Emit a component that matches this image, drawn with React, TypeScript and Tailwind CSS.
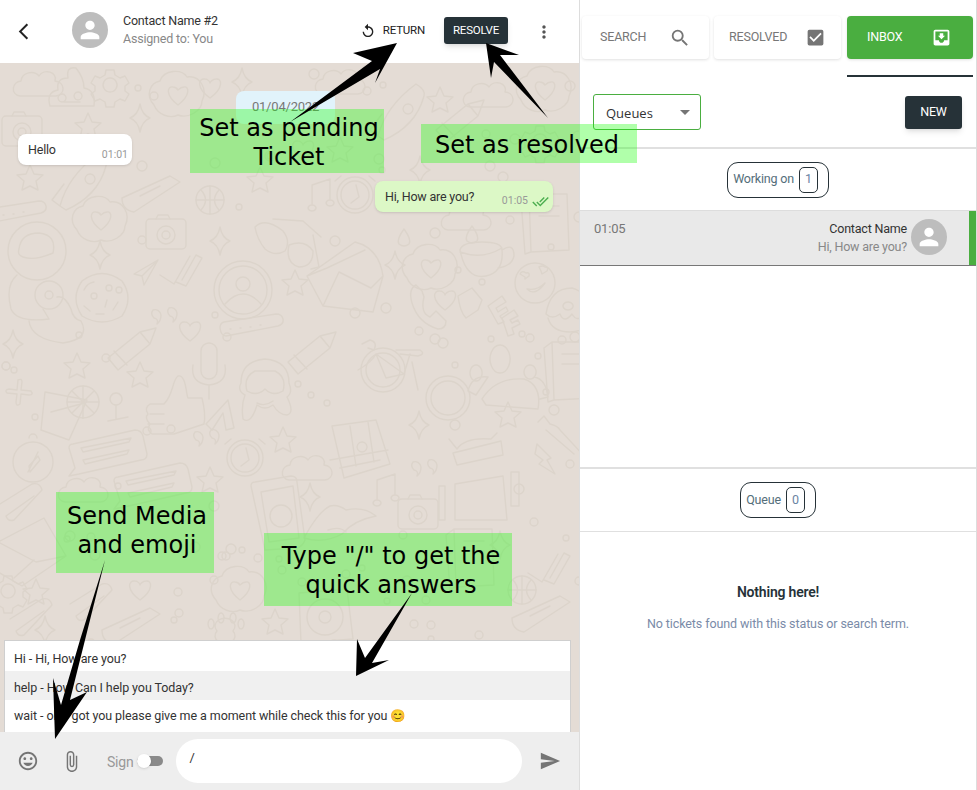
import { ReactNode } from 'react';
import {
  MdArrowBackIosNew, MdAttachFile, MdCheckBox, MdDoneAll, MdInsertEmoticon, MdMoreVert,
  MdMoveToInbox, MdPerson, MdReplay, MdSearch, MdSend, MdArrowDropDown,
} from 'react-icons/md';

const shapes: Record<string, ReactNode> = {
  star: <path d="M0-13L4-4 13-3 6 3 8 12 0 8-8 12-6 3-13-3-4-4Z" />,
  spark: <path d="M0-14Q2-3 10 0Q2 3 0 14Q-2 3-10 0Q-2-3 0-14Z" />,
  heart: <path d="M0 10C-14 0-12-10-5-9C-2-9 0-6 0-5C0-6 3-9 6-9C12-10 14 0 0 10Z" />,
  quote: <path d="M-12-8a6 6 0 0 1 8 5q0 6-4 9q2-5-3-6q-4-4-1-8ZM4-10a6 6 0 0 1 8 5q0 6-4 9q2-5-3-6q-4-4-1-8Z" />,
  plane: <path d="M13-12L-11 2-3 4-1 13Z M13-12L-3 4" />,
  check: <path d="M-22 3L-8 12 8-16 M-6 10L4 14 20-14 14-17 0 8" />,
  camera: (<g><rect x="-20" y="-14" width="40" height="30" rx="4" /><circle cy="2" r="9" /><circle cy="2" r="4" /><path d="M-10-14l2-4h10l2 4" /></g>),
  portrait: (<g><circle r="29" /><circle r="24" /><circle cy="-6" r="7" /><path d="M-18 14Q0-6 18 14" /></g>),
  cookie: (<g><path d="M-20-17Q0-32 20-17Q32 0 20 18Q0 30-20 18Q-32 0-20-17Z" /><circle cx="-8" cy="-2" r="3" /><circle cx="7" cy="-10" r="3" /><circle cx="17" cy="-8" r="3" /><path d="M-18-8q3-7 10-8M5 2l-2 7M-18 8l6 5M16 4l-5 8M-6 16h8" /></g>),
  cloud: <path d="M-20 12C-30 10-28-2-19-3C-18-12-6-14-1-8C4-16 18-12 15-3C25-2 26 10 16 12Z" />,
  cloudHeart: (<g><path d="M-24 10C-33 0-28-12-18-14C-14-26 4-26 9-18C22-20 30-6 24 6C24 16 10 24 0 20C-8 24-20 20-24 10Z" /><path d="M0 10C-13 0-11-9-5-8C-2-8 0-5 0-5C0-5 3-8 6-8C11-9 13 0 0 10Z" /></g>),
  pencil: <path d="M-24 10L8-16 24-20 18-4-14 22ZM-18 3l13 14M8-16l10 12" />,
  bar: <g><path d="M-32 0q0-5 4-6L24-14q6 0 7 5t-5 7L-26 8q-5 0-6-8Z" /><path d="M-22 1l1 0M-12 0l1 0M-2-1l1 0M8-3l1 0" /></g>,
  mic: <path d="M-8-14a8 8 0 0 1 16 0V6a8 8 0 0 1-16 0ZM-16 0q-3 18 16 20q19-2 16-20M0 20V34" />,
  monkey: <path d="M-24-2Q-24-24 0-26Q24-24 24-2Q28 8 22 12Q30 28 22 30Q14 30 8 20Q0 26-8 20Q-14 40-22 34Q-24 20-20 10Q-28 6-24-2ZM-10-14q-12 6-8 20q10 6 18-2q8 8 18 2q4-14-8-20ZM-8 18q8 4 16-2" />,
  thumb: <path d="M-20 4H-6C4-6 2-20 8-24C16-26 16-6 18-2H32Q36 14 34 24L4 34H-18Q-24 30-20 24Q-26 18-22 14Q-26 8-20 4ZM-20 14H-6M-22 24H-6" />,
  arrowUp: <path d="M-14 10L8-14 14 14 6 16 3-1-8 16Z" />,
  astro: (<g><circle cx="0" cy="-28" r="29" /><path d="M-18-30q2-16 20-16q18 2 14 20q-18 8-30 4q-6-2-4-8ZM-20-4Q-32 6-26 30Q-20 44 12 40L6 30M-8 42Q-6 60 26 64Q54 60 44 42Q36 40 34 30Q28 16 20 18" /><circle cx="12" cy="16" r="14" /><circle cx="12" cy="16" r="4" /></g>),
  drink: (<g><path d="M-20-18L22-10 4 30-24 20Z M-14 2L16-6" /><circle cx="18" cy="-8" r="16" /><path d="M18-24V8M2-8H34M7-19L29 3M7 3L29-19" /></g>),
  lolly: <path d="M-4 14V0M-12 16L8 12M-4-12a6 6 0 1 0 .1 0" />,
  chat: <path d="M-32-6L30-20Q36-20 38-14L42 4Q42 10 36 10L-26 24-36 26-30 18-36-2Q-36-6-32-6ZM-24-2L26-12 24-8-22 2ZM-22 10L24 0 22 4-20 14Z" />,
  compass: (<g><circle r="20" /><path d="M-4-24a4 4 0 0 1 8 0M5-6L-4 4-3 10 7-2Z M5-10L-5 10" /></g>),
  cross: <path d="M-2-14q4-2 4 2l-1 8 10 1q3 4-2 4l-8-1-1 10q-4 3-4-2l1-8-10-1q-3-3 2-4l8 1Z" />,
  cup: <path d="M-22-8Q-20-16 0-16Q20-16 20-8Q22 14 4 18Q-16 22-22-8ZM-22-6Q0 2 20-10M20-8Q32-16 32-2Q30 8 16 10" />,
  face: <g><circle r="20" /><path d="M-10-6l-5-3q2-4 6-1q4-1 3 3l-4 3ZM6-12l-2-4q4-2 6 0q4 0 2 4l-5 3ZM-8 6q8 8 18-6q-8 8-18 6Z" /></g>,
  phone: <path d="M-12-20Q-20-16-16-2Q-10 18 10 24Q18 24 18 16L8 6 2 12Q-8 8-4-8L-6-14Z" />,
  bff: <path d="M-32-14L-18-22-8-10-12 0-24 8Q-30 2-32-14ZM-2-4L12-14 16-8 6-2 8 2 16-3 18 1 10 6 14 12 8 14ZM12 8L24 0 28 6 20 10 22 13 28 10 30 14 22 18 24 24 18 26Z" />,
  wheel: <g><circle r="22" /><circle r="17" /></g>,
  bike: <path d="M-50-18l8-4q8 2 4 10l-6-2M-36-8L-8 12-26 16-36-8Q-40 0-54 8M-8 12L-2-8M-16-12H8q6 4-2 6L-12-8M0 0L6 28" />,
  people: <path d="M-28 14Q-14-8 14-6Q32 0 28 24L-24 20ZM-10-40a10 14 0 1 0 .1 0M-34-20a6 8 0 1 0 .1 0M20-20a6 7 0 1 0 .1 0M-42 6Q-38-10-22-8L-34 10ZM24-8Q36-6 38 12L30 14" />,
  android: <path d="M-18-6Q-10-18 16-16L22-22M-18-6L-26-16M-22-2L26-14 28 0-18 10Z" />,
  tablet: <path d="M-20-6L28-14 32 30-20 30ZM-36-4h6v34h-6ZM36-18h8v34h-8Z" />,
  bolt: <path d="M-8-16L6-2 2 0 10 14-6 4-2 0-10-6Z" />,
  guitar: <path d="M-22-18l6-6 6 8q8 2 10 6L26 18M-14-10L14 14" />,
  map: <path d="M-28-24L16-30 30 14-16 28ZM-30 10L28 0M-10-24l6 40M8-28l6 40M2-8a5 5 0 1 0 .1 0M-20 18L20 10" />,
  clock: <g><circle r="18" /><circle r="14" /><path d="M1-10L4 2-4 8M-20-14l6-5M14-19l6 5" /></g>,
  phoneWa: <g><path d="M-20-28L16-34Q22-34 22-28L30 30Q28 36 22 38L-10 40-24-24Q-24-28-20-28ZM-14-18L18-24 24 28-6 32Z" /><circle cx="6" cy="6" r="11" /></g>,
  music: <path d="M-8 10a4 3 0 1 0 .1 0V-10L10-16V5a4 3 0 1 0 .1 0" />,
  lips: <path d="M-36 18Q-22-8-10-14Q-2-16 6-10Q24-14 36-4Q14 0 2 14Q-16 24-36 18ZM-12 10Q0 6 6 12" />,
  clip: <path d="M-20-6L12-26q8-2 10 6L-6 10q-6 2-8-4L14-14" />,
  envelope: <path d="M-32-10L14-34 36 4-8 34-32 20ZM-32-10L6 10 36 4M-16 26L4 8" />,
  poop: <path d="M-22 14Q-26 0-14-2Q-16-14-4-14Q-6-26 4-24Q12-14 12-4Q24-2 22 14ZM-10 2a4 4 0 1 0 .1 0M6 0a4 4 0 1 0 .1 0M-8 10h16" />,
  gear: <path d="M-4-14h8l1 5 5 3 5-2 4 7-4 3v5l4 3-4 7-5-2-5 3-1 5h-8l-1-5-5-3-5 2-4-7 4-3v-5l-4-3 4-7 5 2 5-3ZM0-6a7 7 0 1 0 .1 0" />,
  ball: <g><circle r="14" /><path d="M-14 0H14M0-14V14M-9-10Q0 0-9 10M9-10Q0 0 9 10" /></g>,
  trumpet: <path d="M-28 8L20-14 30-8-16 22Q-28 20-28 8ZM-10 6L10-4" />,
  vinyl: <g><path d="M-26-22L22-26 28 24-24 28Z" /><circle cy="2" r="18" /><circle cy="2" r="6" /></g>,
  paw: <path d="M-8 6a10 8 0 1 0 16 0a10 8 0 1 0-16 0ZM-14-6a3 5 0 1 0 .1 0M-4-12a3 5 0 1 0 .1 0M8-12a3 5 0 1 0 .1 0M16-6a3 5 0 1 0 .1 0" />,
  donut: <path d="M-24 4Q-20-22 2-22Q18-18 22 4Q18 8 14 2Q8 14 2 4Q-6 14-10 4Q-18 10-24 4ZM-2-8a5 4 0 1 0 .1 0M-22 8Q-18 22 0 22Q16 22 20 8" />,
  book: <path d="M-16-26L22-26 24 30-14 32ZM-24-20L-16-26M-24-20L-20 34-14 32M-6-14H14M-6-4H14" />,
  rocket: <path d="M-22 26Q-14-4 16-26Q26-20 24-14Q16 16-16 30ZM-22 26L-30 20-18 4M8-6a5 5 0 1 0 .1 0" />,
  glasses: <path d="M-28-18Q-18-28 0-14Q8-4 2 6Q-8 12-18 4Q-26-6-28-18ZM6 0Q22-6 30 6Q30 22 16 22Q2 18 6 0ZM-10-26L20-24 38-8M30-10L36 22 28 24" />,
  letter: <path d="M-38 2L10-32Q34-26 38 2L28 38-22 32ZM-38 2L-18-6 20-24M-22 32L-6-2 26 14 38 2" />,
  drop: <path d="M0-9Q8 2 5 6Q0 10-5 6Q-8 2 0-9Z" />,
};

const doodles: [string, number, number][] = [
  ['astro', 37, 279], ['cookie', 102, 298], ['cloudHeart', 101, 220], ['camera', 166, 233], ['spark', 100, 255],
  ['plane', 145, 272], ['check', 182, 272], ['quote', 165, 318], ['heart', 190, 331], ['pencil', 132, 348],
  ['star', 77, 366], ['star', 140, 375], ['thumb', 170, 400], ['spark', 13, 344], ['cross', 20, 394],
  ['drink', 65, 410], ['lolly', 120, 405], ['chat', 105, 450], ['chat', 150, 483], ['compass', 33, 462],
  ['cloud', 85, 490], ['portrait', 243, 290], ['bar', 252, 328], ['mic', 209, 365], ['monkey', 265, 385],
  ['pencil', 312, 352], ['letter', 345, 274], ['glasses', 283, 245], ['star', 295, 283], ['spark', 220, 241],
  ['arrowUp', 220, 414], ['cup', 482, 258], ['face', 535, 283], ['bff', 490, 310],
  ['phone', 428, 305], ['heart', 445, 300], ['cloudHeart', 431, 268], ['spark', 395, 265], ['wheel', 448, 398],
  ['wheel', 383, 370], ['bike', 412, 362], ['people', 510, 385], ['donut', 570, 310], ['book', 568, 368],
  ['star', 508, 415], ['android', 475, 455], ['spark', 419, 425], ['guitar', 560, 440], ['bolt', 545, 460],
  ['tablet', 475, 490], ['clock', 245, 458], ['star', 283, 440], ['map', 360, 450],
  ['cloud', 309, 468], ['phoneWa', 275, 510], ['spark', 310, 497], ['music', 385, 490], ['lips', 340, 520],
  ['camera', 418, 513], ['quote', 425, 470], ['star', 210, 480], ['quote', 207, 440], ['clip', 20, 510],
  ['envelope', 30, 552], ['gear', 8, 590], ['star', 36, 592], ['clip', 30, 625], ['spark', 45, 630],
  ['vinyl', 325, 615], ['paw', 225, 625], ['star', 275, 622], ['cloudHeart', 240, 590], ['ball', 522, 590],
  ['trumpet', 540, 610], ['check', 550, 570], ['spark', 500, 545], ['book', 470, 555], ['heart', 140, 590],
  ['trumpet', 130, 622], ['clip', 90, 610], ['poop', 72, 92], ['gear', 110, 84], ['cloud', 40, 84],
  ['star', 88, 126], ['cloudHeart', 178, 95], ['spark', 140, 118], ['rocket', 82, 180], ['star', 30, 178],
  ['heart', 210, 88], ['spark', 242, 82], ['cloud', 342, 82], ['rocket', 400, 110], ['star', 440, 100],
  ['pencil', 460, 120], ['cloud', 490, 95], ['cloudHeart', 545, 90], ['star', 260, 180], ['music', 320, 195],
  ['clock', 355, 195], ['drop', 404, 238], ['drop', 472, 235], ['cloud', 468, 218], ['book', 545, 220],
  ['ball', 210, 200], ['trumpet', 150, 190], ['bar', 15, 215], ['heart', 303, 150], ['star', 340, 150],
  ['gear', 540, 140], ['camera', 22, 130], ['spark', 420, 170],
];

// scattered little circles of the wallpaper, same seed on every render
const dots: [number, number, number][] = [];
let seed = 7;
for (let i = 0; i < 210; i++) {
  seed = (seed * 1103 + 12345) % 65536;
  const x = seed % 580;
  seed = (seed * 1103 + 12345) % 65536;
  const y = 63 + (seed % 590);
  seed = (seed * 1103 + 12345) % 65536;
  if (!doodles.some(([, dx, dy]) => Math.abs(dx - x) < 24 && Math.abs(dy - y) < 22)) dots.push([x, y, 3 + (seed % 3)]);
}

function Wallpaper() {
  return (
    <svg className="absolute inset-0 h-full w-full" viewBox="0 63 579 669" preserveAspectRatio="none" fill="none" stroke="#dcd4cb" strokeWidth="1.4" strokeLinejoin="round" strokeLinecap="round">
      {doodles.map(([name, x, y], i) => (
        <g key={i} transform={`translate(${x} ${y})`}>{shapes[name]}</g>
      ))}
      {dots.map(([x, y, r], i) => <circle key={i} cx={x} cy={y} r={r} />)}
    </svg>
  );
}

function ChatHeader() {
  return (
    <div className="flex h-[63px] shrink-0 items-center bg-white pl-[14px] pr-[25px]">
      <MdArrowBackIosNew size={19} className="text-[#222]" />
      <div className="ml-[39px] flex size-[36px] items-center justify-center rounded-full bg-[#bdbdbd] text-white -mt-[4px]">
        <MdPerson size={28} />
      </div>
      <div className="ml-[15px] -mt-[4px] text-[12.5px] leading-[18px]">
        <div className="text-[#333]">Contact Name #2</div>
        <div className="text-[#888]">Assigned to: You</div>
      </div>
      <div className="ml-auto -mt-[2px] flex items-center gap-[7px] text-[11.5px] text-[#222]">
        <MdReplay size={16} />
        <span>RETURN</span>
      </div>
      <div className="ml-[19px] -mt-[2px] flex h-[27px] w-[64px] items-center justify-center rounded-[3px] bg-[#263238] text-[11.5px] text-white shadow-md">RESOLVE</div>
      <MdMoreVert size={20} className="ml-[26px] text-[#555]" />
    </div>
  );
}

function Messages() {
  return (
    <div className="relative flex flex-col pl-[18px] pr-[26px] pt-[28px]">
      <div className="flex h-[33px] w-[99px] items-center justify-center self-center rounded-[8px] bg-[#e1f3fb] pb-[2px] text-[13px] text-[#777]">01/04/2022</div>
      <div className="relative mt-[10px] flex h-[31px] w-[114px] items-center rounded-[8px] bg-white pl-[10px] pt-[2px] text-[12.5px] text-[#333] shadow-sm">
        Hello
        <span className="absolute bottom-[2px] right-[4px] text-[10.5px] tracking-normal text-[#999]">01:01</span>
      </div>
      <div className="relative mt-[16px] flex h-[31px] w-[178px] items-center self-end rounded-[8px] bg-[#dcf8c6] pl-[10px] pt-[2px] text-[12.5px] text-[#333] shadow-sm">
        Hi, How are you?
        <span className="absolute bottom-[3px] right-[25px] text-[10.5px] tracking-normal text-[#999]">01:05</span>
        <MdDoneAll size={17} className="absolute bottom-[2px] right-[4px] text-[#4caf50]" />
      </div>
    </div>
  );
}

function QuickAnswers() {
  return (
    <div className="absolute bottom-0 left-[4px] w-[567px] border border-b-0 border-[#cfcfcf] bg-white text-[12.5px] tracking-[-0.08px] text-[#333]">
      <div className="flex h-[30px] items-center pl-[9px] pt-[6px]">Hi - Hi, How are you?</div>
      <div className="flex h-[29px] items-center bg-[#f0f0f0] pl-[9px] pt-[5px]">help - How Can I help you Today?</div>
      <div className="flex h-[32px] items-center pl-[9px] pt-[1px]">wait - ok, I got you please give me a moment while check this for you 😊</div>
    </div>
  );
}

function Composer() {
  return (
    <div className="flex h-[58px] shrink-0 items-center bg-[#eeeeee] pl-[17px] pr-[18px]">
      <MdInsertEmoticon size={22} className="text-[#757575]" />
      <MdAttachFile size={23} className="ml-[21px] text-[#757575]" />
      <span className="ml-[24px] mt-[2px] text-[14px] text-[#999]">Sign</span>
      <div className="relative ml-[3px] h-[10px] w-[26px] rounded-full bg-[#8a8a8a]">
        <div className="absolute -top-[2px] left-0 size-[14px] rounded-full bg-white shadow" />
      </div>
      <div className="ml-[13px] h-[44px] w-[346px] rounded-[22px] bg-white pl-[14px] pt-[9px] text-[13px] text-[#333]">/</div>
      <MdSend size={22} className="ml-auto text-[#757575]" />
    </div>
  );
}

function Tab({ label, icon, active, className }: { label: string; icon: ReactNode; active?: boolean; className: string }) {
  return (
    <div className={`flex h-[43px] items-center justify-between rounded-[4px] text-[12.5px] shadow-[0_1px_3px_rgba(0,0,0,0.12)] ${className} ${active ? 'bg-[#4aae40] text-white' : 'bg-white text-[#777]'}`}>
      <span>{label}</span>
      {icon}
    </div>
  );
}

function CountChip({ label, count }: { label: string; count: number }) {
  return (
    <div className="flex h-[36px] items-center gap-[5px] rounded-[11px] border border-[#263238] pl-[5px] pr-[10px] text-[12.5px] text-[#546e7a]">
      <span>{label}</span>
      <span className="flex h-[26px] w-[19px] items-center justify-center rounded-[5px] border border-[#263238] text-[#6b84a3]">{count}</span>
    </div>
  );
}

function Sidebar() {
  return (
    <div className="flex w-[398px] shrink-0 flex-col border-l border-r border-[#dddddd] bg-white">
      <div className="flex h-[75px] shrink-0 items-start gap-[5px] pl-[2px] pt-[16px]">
        <Tab label="SEARCH" className="w-[127px] pl-[18px] pr-[18px]" icon={<MdSearch size={22} className="text-[#757575]" />} />
        <Tab label="RESOLVED" className="w-[127px] pl-[15px] pr-[15px]" icon={<MdCheckBox size={21} className="text-[#757575]" />} />
        <Tab label="INBOX" className="ml-[1px] w-[126px] pl-[20px] pr-[21px]" active icon={<MdMoveToInbox size={21} />} />
      </div>
      <div className="ml-[267px] h-[2px] w-[126px] shrink-0 bg-[#263238]" />
      <div className="flex h-[72px] shrink-0 items-start justify-between border-b-2 border-[#e0e0e0] pl-[13px] pr-[14px] pt-[17px]">
        <div className="flex h-[36px] w-[108px] items-center justify-between rounded-[3px] border border-[#4aae40] pl-[12px] pr-[3px] pt-[3px] text-[13px] tracking-normal text-[#333] [font-family:'Open_Sans']">
          Queues
          <MdArrowDropDown size={24} className="-mt-[4px] text-[#757575]" />
        </div>
        <div className="mt-[2px] flex h-[33px] w-[57px] items-center justify-center rounded-[3px] bg-[#263238] text-[12.5px] text-white shadow-md">NEW</div>
      </div>
      <div className="flex h-[61px] shrink-0 items-center justify-center">
        <CountChip label="Working on" count={1} />
      </div>
      <div className="flex h-[56px] shrink-0 border-y border-t-[#dddddd] border-b-[#777] bg-[#e9e9e9]">
        <div className="pl-[14px] pt-[9px] text-[13px] leading-[18px] text-[#777]">01:05</div>
        <div className="ml-auto pt-[9px] text-right text-[12.5px] leading-[18px]">
          <div className="text-[#333]">Contact Name</div>
          <div className="text-[#888]">Hi, How are you?</div>
        </div>
        <div className="ml-[4px] mr-[22px] mt-[8px] flex size-[36px] items-center justify-center rounded-full bg-[#bdbdbd] text-white">
          <MdPerson size={28} />
        </div>
        <div className="w-[7px] bg-[#4aae40]" />
      </div>
      <div className="h-[203px] shrink-0 border-b-2 border-[#e0e0e0]" />
      <div className="flex h-[63px] shrink-0 items-center justify-center border-b border-[#e0e0e0]">
        <CountChip label="Queue" count={0} />
      </div>
      <div className="flex flex-1 flex-col items-center pt-[51px]">
        <div className="text-[14px] font-semibold leading-[18px] text-[#263238]">Nothing here!</div>
        <div className="mt-[14px] text-[12.5px] leading-[18px] tracking-[-0.1px] text-[#7a8ba8]">No tickets found with this status or search term.</div>
      </div>
    </div>
  );
}

function Note({ children, className }: { children: ReactNode; className: string }) {
  return (
    <div className={`absolute flex items-center justify-center bg-[rgba(29,255,12,0.35)] text-center text-[24px] leading-[29px] tracking-normal text-black [font-family:'DejaVu_Sans'] ${className}`}>
      {children}
    </div>
  );
}

function Annotations() {
  return (
    <>
      <Note className="left-[190px] top-[109px] h-[64px] w-[194px] pl-[4px] pt-[4px]">Set as pending<br />Ticket</Note>
      <Note className="left-[421px] top-[124px] h-[39px] w-[216px] pr-[4px] pt-[4px]">Set as resolved</Note>
      <Note className="left-[56px] top-[492px] h-[81px] w-[158px] pb-[4px] pl-[4px]">Send Media<br />and emoji</Note>
      <Note className="left-[264px] top-[533px] h-[73px] w-[248px] pl-[6px] pt-[2px]">Type "/" to get the<br />quick answers</Note>
      <svg className="pointer-events-none absolute inset-0" width="977" height="790" fill="#000">
        <polygon points="290,122 372,61 353,53 397,43 375,83 380,69" />
        <polygon points="548,118 500,55 519,55 486,43 491,78 494,62" />
        <polygon points="105,560 85,640 70,700 87,692 55,739 53,678 61,705 80,640" />
        <polygon points="412,593 365,658 357,639 356,676 389,660 372,663" />
      </svg>
    </>
  );
}

export default function App() {
  return (
    <div className="relative flex h-[790px] w-[977px] overflow-hidden bg-white [font-family:Roboto,sans-serif] tracking-[-0.2px]">
      <div className="flex w-[579px] shrink-0 flex-col">
        <ChatHeader />
        <div className="relative flex-1 bg-[#e4dcd5]">
          <Wallpaper />
          <Messages />
          <QuickAnswers />
        </div>
        <Composer />
      </div>
      <Sidebar />
      <Annotations />
    </div>
  );
}
